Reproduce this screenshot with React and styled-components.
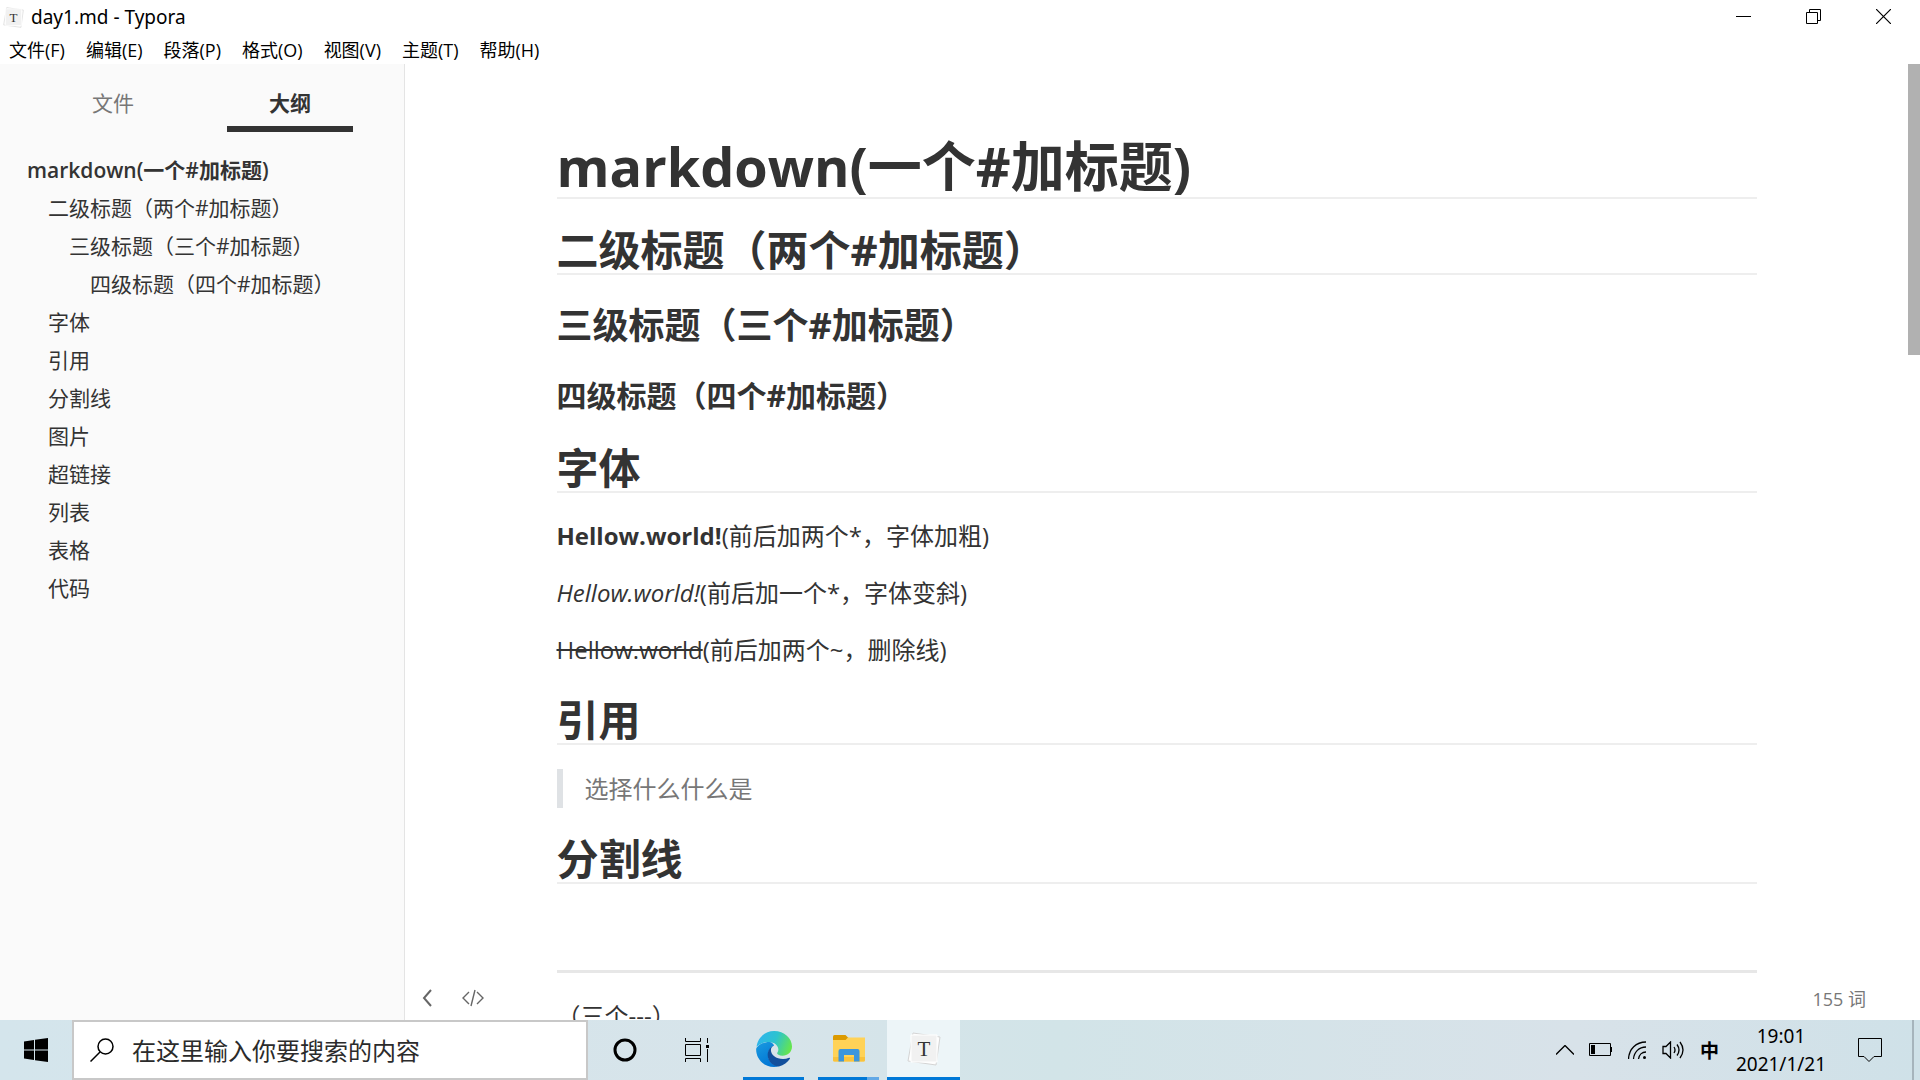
import { useState } from 'react'
import styled, { createGlobalStyle, css } from 'styled-components'

const GlobalStyle = createGlobalStyle`
  * {
    box-sizing: border-box;
  }

  body {
    margin: 0;
    background: #fff;
    color: #333;
    font-family: 'Open Sans', 'Noto Sans CJK SC', sans-serif;
  }

  button {
    margin: 0;
    padding: 0;
    border: none;
    background: none;
    color: inherit;
    font: inherit;
    cursor: pointer;
  }

  svg {
    display: block;
  }
`

const Screen = styled.div`
  display: flex;
  flex-direction: column;
  height: 100vh;
  overflow: hidden;
`

const TitleBar = styled.header`
  display: flex;
  justify-content: space-between;
  flex: none;
  height: 34px;
  padding-right: 2px;
  color: #000;
`

const AppName = styled.div`
  display: flex;
  align-items: center;
  gap: 7px;
  padding-left: 3px;
  font-family: 'Noto Sans', 'Noto Sans CJK SC', sans-serif;
  font-size: 19px;
`

const WindowButtons = styled.div`
  display: flex;
  height: 32px;
`

const WindowButton = styled.button`
  display: flex;
  align-items: center;
  justify-content: center;
  width: 70px;
`

const MenuBar = styled.nav`
  display: flex;
  align-items: center;
  flex: none;
  gap: 21px;
  height: 30px;
  padding: 2px 9px 0;
  font-size: 18px;
  line-height: 28px;
  color: #000;
`

const Main = styled.main`
  display: flex;
  flex: 1;
  min-height: 0;
`

const Sidebar = styled.aside`
  flex: none;
  width: 405px;
  background: #fafafa;
  border-right: 1px solid #e4e4e4;
`

const Tabs = styled.div`
  display: flex;
  gap: 51px;
  padding: 14px 50px 0;
`

const Tab = styled.button`
  width: 126px;
  height: 54px;
  font-size: 21px;
  color: #777;
  border-bottom: 6px solid transparent;

  ${({ $active }) =>
    $active &&
    css`
      color: #333;
      font-weight: bold;
      border-color: #333;
    `}
`

const Outline = styled.nav`
  display: flex;
  flex-direction: column;
  padding: 19px 27px;
`

const OutlineLink = styled.a`
  padding-left: ${({ $level }) => ($level - 1) * 21}px;
  font-size: 21px;
  line-height: 38px;
  font-weight: ${({ $level }) => ($level === 1 ? 600 : 400)};
  color: #333;
  text-decoration: none;
  white-space: nowrap;
`

const Editor = styled.section`
  position: relative;
  display: flex;
  flex: 1;
  min-width: 0;
`

const Page = styled.div`
  flex: 1;
  min-width: 0;
  overflow: hidden;
`

const Article = styled.article`
  max-width: 1200px;
  margin: 0 auto;
  padding-top: 70px;
  font-size: 24px;
  line-height: 38px;

  h1,
  h2,
  h3,
  h4 {
    margin: 0 0 24px;
    font-weight: bold;
  }

  h1 {
    padding-top: 2px;
    font-size: 54px;
    line-height: 61px;
    border-bottom: 2px solid #eee;
  }

  h2 {
    padding-top: 4px;
    font-size: 42px;
    line-height: 46px;
    border-bottom: 2px solid #eee;
  }

  h3 {
    padding-top: 2px;
    font-size: 36px;
    line-height: 50px;
  }

  h4 {
    font-size: 30px;
    line-height: 42px;
  }

  p {
    min-height: 38px;
    margin: 0 0 19px;
  }

  p + h2,
  p + hr {
    margin-top: 24px;
  }

  hr {
    height: 3px;
    margin: 24px 0;
    border: none;
    background: #e7e7e7;
  }

  blockquote {
    margin: 0 0 24px;
    padding-left: 22px;
    line-height: 39px;
    border-left: 6px solid #dfe2e5;
    color: #777;
  }
`

const ScrollTrack = styled.div`
  flex: none;
  width: 12px;
`

const ScrollThumb = styled.div`
  height: 291px;
  background: #b1b1b1;
`

const Footer = styled.footer`
  position: absolute;
  right: 54px;
  bottom: 0;
  left: 16px;
  display: flex;
  align-items: center;
  justify-content: space-between;
  height: 45px;
  font-size: 18px;
  color: #777;
`

const FooterTools = styled.div`
  display: flex;
  gap: 27px;
`

const Taskbar = styled.footer`
  display: flex;
  flex: none;
  height: 60px;
  background: linear-gradient(90deg, #d4e5ec, #d7e4ea 40%, #d2e4e8 55%, #d8e2e9 82%, #cfe1e8);
  color: #000;
`

const StartButton = styled.button`
  display: flex;
  align-items: center;
  justify-content: center;
  width: 72px;
`

const SearchBox = styled.label`
  display: flex;
  align-items: center;
  gap: 18px;
  width: 516px;
  padding-left: 16px;
  background: #fff;
  border: 2px solid #c8c8c8;
`

const SearchInput = styled.input`
  flex: 1;
  min-width: 0;
  padding: 0;
  border: none;
  outline: none;
  font: inherit;
  font-size: 24px;

  &::placeholder {
    color: #2b2b2b;
    opacity: 1;
  }
`

const TaskApps = styled.div`
  display: flex;
  flex: 1;
`

const TaskButton = styled.button`
  display: flex;
  flex-direction: column;
  align-items: center;
  width: ${({ $width }) => $width || 73}px;

  ${({ $active }) =>
    $active &&
    css`
      margin-left: 5px;
      background: #edf5f8;
    `}
`

const TaskIcon = styled.span`
  display: flex;
  flex: 1;
  align-items: center;
`

const TaskLine = styled.span`
  width: ${({ $full }) => ($full ? '100%' : '61px')};
  height: 3px;
  background: ${({ $stacked }) =>
    $stacked ? 'linear-gradient(90deg, #0078d7 80%, #63a9e6 80%)' : '#0078d7'};
`

const Tray = styled.div`
  display: flex;
  align-items: center;
  gap: 15px;
`

const InputMode = styled.button`
  font-size: 19px;
  font-weight: bold;
`

const Clock = styled.button`
  width: 94px;
  font-family: 'Noto Sans', sans-serif;
  font-size: 19px;
  line-height: 28px;
`

const Notifications = styled.button`
  padding: 0 15px;
`

const ShowDesktop = styled.button`
  align-self: stretch;
  width: 8px;
  border-left: 2px solid #a6b4bc;
`

const menus = ['文件(F)', '编辑(E)', '段落(P)', '格式(O)', '视图(V)', '主题(T)', '帮助(H)']

const outline = [
  { level: 1, text: 'markdown(一个#加标题)' },
  { level: 2, text: '二级标题（两个#加标题）' },
  { level: 3, text: '三级标题（三个#加标题）' },
  { level: 4, text: '四级标题（四个#加标题）' },
  { level: 2, text: '字体' },
  { level: 2, text: '引用' },
  { level: 2, text: '分割线' },
  { level: 2, text: '图片' },
  { level: 2, text: '超链接' },
  { level: 2, text: '列表' },
  { level: 2, text: '表格' },
  { level: 2, text: '代码' }
]

const TyporaIcon = ({ size }) => (
  <svg width={size} height={size} viewBox="0 0 34 34">
    <path d="M6 1 33 5 29 33 1 29Z" fill="#fdfdfd" stroke="#d4d4d4" strokeWidth="1" />
    <path d="M4 3h26v27H4z" fill="#f1f1f1" stroke="#fff" strokeWidth="1" />
    <text
      x="17"
      y="24"
      textAnchor="middle"
      fontFamily="Liberation Serif, serif"
      fontSize="21"
      fill="#333"
    >
      T
    </text>
  </svg>
)

const EdgeIcon = () => (
  <svg width="36" height="36" viewBox="0 0 256 256">
    <defs>
      <linearGradient id="edgeTop" x1="0" y1="0.3" x2="1" y2="0.6">
        <stop offset="0" stopColor="#2fb4ee" />
        <stop offset="0.5" stopColor="#2cc3cf" />
        <stop offset="1" stopColor="#66e64c" />
      </linearGradient>
      <linearGradient id="edgeSide" x1="0" y1="0" x2="0.6" y2="1">
        <stop offset="0" stopColor="#1a9be0" />
        <stop offset="1" stopColor="#0074d4" />
      </linearGradient>
    </defs>
    <path
      d="M4 112C12 46 65 0 129 0c72 0 127 52 127 110 0 40-31 66-68 66-24 0-38-9-38-17 0-7 9-10 9-28 0-27-29-53-66-53-38 0-74 16-89 34Z"
      fill="url(#edgeTop)"
    />
    <path
      d="M95 78c-48 0-94 30-94 54 0 68 56 124 127 124 12 0 24-1 34-5-45-6-76-40-76-81 0-32 18-58 43-67-8-15-20-25-34-25Z"
      fill="url(#edgeSide)"
    />
    <path
      d="M129 103c-28 7-46 35-46 67 0 46 40 82 80 82 34-8 62-29 78-55 3-5-2-9-6-7-14 6-28 9-43 9-50 0-86-29-86-64 0-14 9-26 23-32Z"
      fill="#114f9c"
    />
  </svg>
)

const FolderIcon = () => (
  <svg width="32" height="28" viewBox="0 0 32 28">
    <path d="M0 1.5Q0 0 1.500 0h11l3 3-2 3H0Z" fill="#dc9a00" />
    <path d="M0 5h12.500l2.500-2.500h17V25q0 1.500-1.500 1.500h-29Q0 26.500 0 25Z" fill="#ffd257" />
    <path d="M0 22h32v3q0 1.500-1.500 1.500h-29Q0 26.500 0 25Z" fill="#f9c23c" />
    <path d="M5.500 26.500V16q0-2 2-2h17q2 0 2 2v10.500h-5.500V20H11v6.500Z" fill="#3b96dd" />
  </svg>
)

const Line = ({ width, height, stroke = '#000', strokeWidth = 1, children }) => (
  <svg
    width={width}
    height={height}
    viewBox={`0 0 ${width} ${height}`}
    fill="none"
    stroke={stroke}
    strokeWidth={strokeWidth}
  >
    {children}
  </svg>
)

export default function App() {
  const [tab, setTab] = useState('大纲')
  const [search, setSearch] = useState('')

  return (
    <Screen>
      <GlobalStyle />
      <TitleBar>
        <AppName>
          <TyporaIcon size={21} />
          day1.md - Typora
        </AppName>
        <WindowButtons>
          <WindowButton aria-label="最小化">
            <Line width={15} height={15}>
              <path d="M0 7.500h15" />
            </Line>
          </WindowButton>
          <WindowButton aria-label="还原">
            <Line width={15} height={15}>
              <path d="M.5 3.500h11v11H.5zM3.500 3.500v-3h11v11h-3" />
            </Line>
          </WindowButton>
          <WindowButton aria-label="关闭">
            <Line width={15} height={15} strokeWidth={1.2}>
              <path d="m0 0 15 15M15 0 0 15" />
            </Line>
          </WindowButton>
        </WindowButtons>
      </TitleBar>
      <MenuBar>
        {menus.map((menu) => (
          <button key={menu}>{menu}</button>
        ))}
      </MenuBar>

      <Main>
        <Sidebar>
          <Tabs>
            {['文件', '大纲'].map((name) => (
              <Tab key={name} $active={tab === name} onClick={() => setTab(name)}>
                {name}
              </Tab>
            ))}
          </Tabs>
          <Outline>
            {outline.map(({ level, text }) => (
              <OutlineLink key={text} href={`#${text}`} $level={level}>
                {text}
              </OutlineLink>
            ))}
          </Outline>
        </Sidebar>

        <Editor>
          <Page>
            <Article>
              <h1>markdown(一个#加标题)</h1>
              <h2>二级标题（两个#加标题）</h2>
              <h3>三级标题（三个#加标题）</h3>
              <h4>四级标题（四个#加标题）</h4>
              <h2>字体</h2>
              <p>
                <strong>Hellow.world!</strong>(前后加两个*，字体加粗)
              </p>
              <p>
                <em>Hellow.world!</em>(前后加一个*，字体变斜)
              </p>
              <p>
                <del>Hellow.world</del>(前后加两个~，删除线)
              </p>
              <h2>引用</h2>
              <blockquote>选择什么什么是</blockquote>
              <h2>分割线</h2>
              <p />
              <hr />
              <p>（三个---）</p>
            </Article>
          </Page>
          <ScrollTrack>
            <ScrollThumb />
          </ScrollTrack>
          <Footer>
            <FooterTools>
              <button aria-label="隐藏侧边栏">
                <Line width={14} height={18} stroke="#666" strokeWidth={2}>
                  <path d="m10 1-7 8 7 8" />
                </Line>
              </button>
              <button aria-label="源代码模式">
                <Line width={22} height={18} stroke="#666" strokeWidth={1.4}>
                  <path d="m7 3-6 6 6 6M15 3l6 6-6 6M13 1 9 17" />
                </Line>
              </button>
            </FooterTools>
            <span>155 词</span>
          </Footer>
        </Editor>
      </Main>

      <Taskbar>
        <StartButton aria-label="开始">
          <svg width="24" height="24" viewBox="0 0 24 24">
            <path d="M0 3.500 10 2v9.500H0ZM11 1.800 24 0v11.500H11ZM0 12.500h10V22L0 20.500ZM11 12.500h13V24l-13-1.800Z" />
          </svg>
        </StartButton>
        <SearchBox>
          <Line width={24} height={24} strokeWidth={1.5}>
            <circle cx="15.500" cy="8.500" r="7.500" />
            <path d="M10 14 .5 23.500" />
          </Line>
          <SearchInput
            aria-label="搜索"
            placeholder="在这里输入你要搜索的内容"
            value={search}
            onChange={(e) => setSearch(e.target.value)}
          />
        </SearchBox>
        <TaskApps>
          <TaskButton aria-label="Cortana">
            <TaskIcon>
              <Line width={24} height={24} strokeWidth={3}>
                <circle cx="12" cy="12" r="10" />
              </Line>
            </TaskIcon>
          </TaskButton>
          <TaskButton aria-label="任务视图" $width={71}>
            <TaskIcon>
              <Line width={26} height={24}>
                <path d="M1.500 0v3.500h15V0M1.500 6.500h15v11h-15zM1.500 24v-3.500h15V24M23.500 0v5M23.500 11v13" />
                <path d="M22 7h3v3h-3z" fill="#000" stroke="none" />
              </Line>
            </TaskIcon>
          </TaskButton>
          <TaskButton aria-label="Microsoft Edge" $width={83}>
            <TaskIcon>
              <EdgeIcon />
            </TaskIcon>
            <TaskLine />
          </TaskButton>
          <TaskButton aria-label="文件资源管理器" $width={67}>
            <TaskIcon>
              <FolderIcon />
            </TaskIcon>
            <TaskLine $stacked />
          </TaskButton>
          <TaskButton aria-label="Typora" $active>
            <TaskIcon>
              <TyporaIcon size={34} />
            </TaskIcon>
            <TaskLine $full />
          </TaskButton>
        </TaskApps>
        <Tray>
          <button aria-label="显示隐藏的图标">
            <Line width={18} height={10} strokeWidth={1.4}>
              <path d="m0 9.500 9-9 9 9" />
            </Line>
          </button>
          <Line width={24} height={14}>
            <path d="M.5.500h21v12H.5zM22.500 4v5" />
            <path d="M2 2h4v9H2z" fill="#000" stroke="none" />
          </Line>
          <Line width={19} height={19} strokeWidth={1.3}>
            <path d="M.5 18C1 8 8 1 18 1M5.500 18C6 11 11 6 18 6M10.500 18c.5-4 3.500-7 7.500-7" />
            <circle cx="16.500" cy="16.500" r="1.500" fill="#000" stroke="none" />
          </Line>
          <Line width={23} height={18} strokeWidth={1.3}>
            <path d="M1 5.500h3l4.500-4.500v16L4 12.500H1zM12 6q2 3 0 6M15 3.500q4 5.500 0 11M18 1q6 8 0 16" />
          </Line>
          <InputMode>中</InputMode>
          <Clock>
            19:01
            <br />
            2021/1/21
          </Clock>
          <Notifications aria-label="通知">
            <Line width={24} height={24}>
              <path d="M.5.500h23v18H16l-5 5-5-5H.5z" />
            </Line>
          </Notifications>
          <ShowDesktop aria-label="显示桌面" />
        </Tray>
      </Taskbar>
    </Screen>
  )
}
